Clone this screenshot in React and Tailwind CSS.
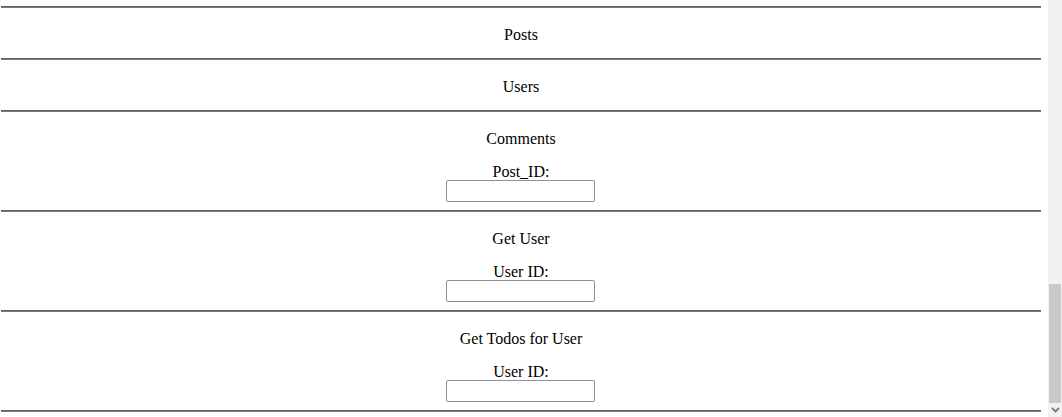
// API explorer sections, scrolled view with browser scrollbar

const Rule = () => (
  <div className="ml-[1px] w-[1040px] h-[2px] border-t border-t-[#5f5f5f] border-b border-b-[#7a7a7a]" />
);

const Section = ({ title, label }) => (
  <div className="flex flex-col items-center">
    <p className="my-4 h-[18px] leading-[21px]">{title}</p>
    {label && (
      <div className="flex flex-col items-center mb-2">
        <label className="h-[18px] leading-[20px]">{label}</label>
        <input
          type="text"
          className="mr-[2px] w-[149px] h-[22px] bg-white border border-[#8f8f9d] rounded-[2px] outline-none"
        />
      </div>
    )}
  </div>
);

export default function App() {
  const sections = [
    { title: 'Posts' },
    { title: 'Users' },
    { title: 'Comments', label: 'Post_ID:' },
    { title: 'Get User', label: 'User ID:' },
    { title: 'Get Todos for User', label: 'User ID:' },
  ];

  return (
    <div className="flex h-[417px] w-[1062px] overflow-hidden bg-white text-black text-[16px] font-['Liberation_Serif',serif]">
      <div className="w-[1048px] shrink-0">
        <div className="w-[1042px]">
          <div className="h-[6px]" />
          <Rule />
          {sections.map((s) => (
            <div key={s.title}>
              <Section title={s.title} label={s.label} />
              <Rule />
            </div>
          ))}
        </div>
      </div>

      {/* scrollbar */}
      <div className="w-[14px] shrink-0 flex flex-col bg-[#f1f1f1]">
        <div className="h-[284px]" />
        <div className="flex-1 mx-[1px] bg-[#c9c9c9]" />
        <div className="h-[14px] flex items-center justify-center">
          <svg width="9" height="6" viewBox="0 0 9 6">
            <path d="M1 1l3.5 3.5L8 1" fill="none" stroke="#7a7a7a" strokeWidth="1.8" />
          </svg>
        </div>
      </div>
    </div>
  );
}
